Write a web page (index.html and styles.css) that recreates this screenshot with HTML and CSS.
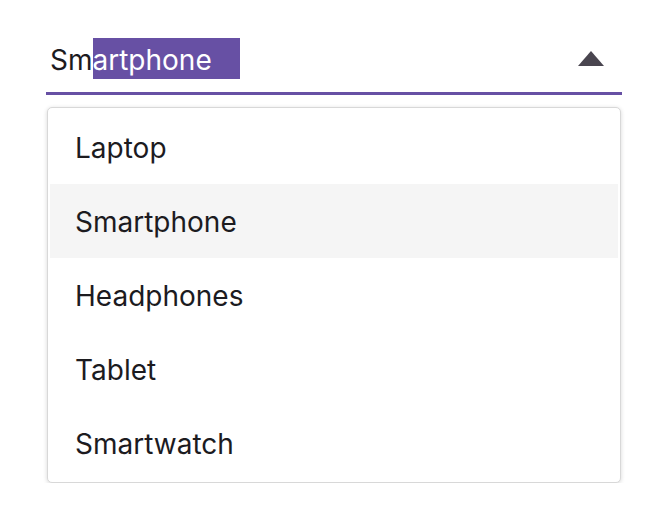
FILE: index.html
```html
<!DOCTYPE html>
<html>
<head>
<meta charset="utf-8">
<link rel="stylesheet" href="styles.css">
</head>
<body>
<div class="combo">
  <div class="field">
    <div class="value"><span class="seg">Sm</span><span class="seg sel">artphone</span></div>
    <svg class="arrow" width="26" height="15" viewBox="0 0 26 15"><path d="M13 0 L26 15 L0 15 Z" fill="#49454f"/></svg>
  </div>
  <ul class="menu">
    <li class="item">Laptop</li>
    <li class="item hover">Smartphone</li>
    <li class="item">Headphones</li>
    <li class="item">Tablet</li>
    <li class="item">Smartwatch</li>
  </ul>
</div>
</body>
</html>
```
FILE: styles.css
```css
html, body {
  margin: 0;
  padding: 0;
  background: #ffffff;
}
body {
  font-family: "Inter", "Noto Sans", sans-serif;
  color: #1c1b1f;
}
.combo {
  width: 576px;
  margin: 0 0 0 46px;
  padding-top: 38px;
}
.field {
  height: 54px;
  border-bottom: 3px solid #6750a4;
  display: flex;
  align-items: flex-start;
  justify-content: space-between;
}
.value {
  display: flex;
  padding-left: 4px;
  font-size: 28px;
  color: #1c1b1f;
}
.seg {
  height: 41px;
  box-sizing: border-box;
  padding-top: 2px;
  display: flex;
  align-items: center;
}
.sel {
  background: #6750a4;
  color: #ffffff;
  padding-right: 28px;
}
.arrow {
  margin-top: 13px;
  margin-right: 18px;
}
.menu {
  list-style: none;
  margin: 12px 1px 0 1px;
  padding: 2px;
  border: 1px solid #d8d8d8;
  border-radius: 5px;
  box-shadow: 0 1px 4px rgba(0, 0, 0, 0.16);
  background: #fff;
}
.item {
  height: 74px;
  box-sizing: border-box;
  padding-top: 2px;
  display: flex;
  align-items: center;
  padding-left: 25px;
  font-size: 28px;
  color: #1c1b1f;
}
.item.hover {
  background: #f5f5f5;
}
```
